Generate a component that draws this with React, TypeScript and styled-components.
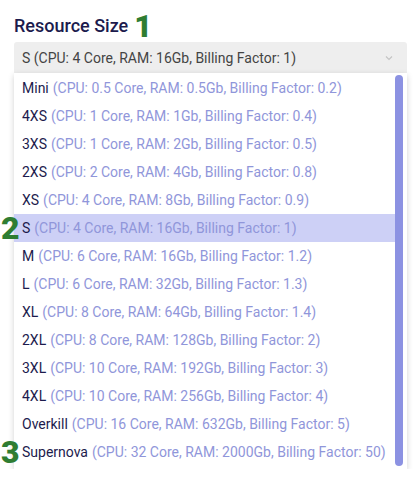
import React from 'react';
import styled, { createGlobalStyle } from 'styled-components';

const GlobalStyle = createGlobalStyle`
  body {
    margin: 0;
    background: #ffffff;
    font-family: Roboto, "Liberation Sans", sans-serif;
  }
`;

interface SizeOption {
  name: string;
  cpu: string;
  ram: string;
  factor: string;
  marker?: string;
}

const options: SizeOption[] = [
  { name: 'Mini', cpu: '0.5', ram: '0.5Gb', factor: '0.2' },
  { name: '4XS', cpu: '1', ram: '1Gb', factor: '0.4' },
  { name: '3XS', cpu: '1', ram: '2Gb', factor: '0.5' },
  { name: '2XS', cpu: '2', ram: '4Gb', factor: '0.8' },
  { name: 'XS', cpu: '4', ram: '8Gb', factor: '0.9' },
  { name: 'S', cpu: '4', ram: '16Gb', factor: '1', marker: '2' },
  { name: 'M', cpu: '6', ram: '16Gb', factor: '1.2' },
  { name: 'L', cpu: '6', ram: '32Gb', factor: '1.3' },
  { name: 'XL', cpu: '8', ram: '64Gb', factor: '1.4' },
  { name: '2XL', cpu: '8', ram: '128Gb', factor: '2' },
  { name: '3XL', cpu: '10', ram: '192Gb', factor: '3' },
  { name: '4XL', cpu: '10', ram: '256Gb', factor: '4' },
  { name: 'Overkill', cpu: '16', ram: '632Gb', factor: '5' },
  { name: 'Supernova', cpu: '32', ram: '2000Gb', factor: '50', marker: '3' },
];

const selected = 'S';

const describe = (o: SizeOption) =>
  `(CPU: ${o.cpu} Core, RAM: ${o.ram}, Billing Factor: ${o.factor})`;

const Page = styled.div`
  padding: 8px 12px 0 14px;
  width: 393px;
`;

const Heading = styled.div`
  display: flex;
  align-items: flex-end;
  gap: 6px;
  height: 34px;
`;

const Title = styled.span`
  font-size: 18px;
  font-weight: 500;
  color: #1c1b4d;
  line-height: 24px;
  margin-bottom: 4px;
`;

const Marker = styled.span`
  font-family: Roboto, "Liberation Sans", sans-serif;
  font-weight: 900;
  font-size: 31px;
  line-height: 31px;
  color: #2f7d32;
`;

const Select = styled.div`
  display: flex;
  align-items: center;
  justify-content: space-between;
  height: 31px;
  padding: 0 12px 0 8px;
  background: #eeeeee;
  border-radius: 3px 3px 0 0;
  font-size: 14px;
  color: #444444;
`;

const Chevron = styled.svg`
  width: 12px;
  height: 12px;
  color: #c4c4c4;
`;

const Menu = styled.div`
  display: flex;
  background: #ffffff;
  box-shadow: 0 2px 6px rgba(0, 0, 0, 0.18);
  padding: 1px 4px 3px 0;
`;

const List = styled.div`
  flex: 1;
  display: flex;
  flex-direction: column;
`;

const Row = styled.div<{ $active?: boolean }>`
  position: relative;
  display: flex;
  align-items: center;
  height: 28px;
  padding-left: 8px;
  font-size: 14px;
  white-space: nowrap;
  background: ${(p) => (p.$active ? '#cdd0f6' : 'transparent')};
`;

const Name = styled.span`
  color: #1c1b4d;
  margin-right: 4px;
`;

const Detail = styled.span`
  color: #9096da;
`;

const RowMarker = styled(Marker)`
  position: absolute;
  left: -13px;
  top: -1px;
  font-size: 32px;
`;

const Scrollbar = styled.div`
  width: 8px;
  margin: 1px 0 0 0;
  border-radius: 4px;
  background: #8c92e2;
`;

export default function App() {
  const current = options.find((o) => o.name === selected)!;
  return (
    <Page>
      <GlobalStyle />
      <Heading>
        <Title>Resource Size</Title>
        <Marker>1</Marker>
      </Heading>
      <Select>
        <span>
          {current.name} {describe(current)}
        </span>
        <Chevron viewBox="0 0 12 12" fill="none">
          <path d="M3 4.5 6 7.5 9 4.5" stroke="currentColor" strokeWidth="1.2" />
        </Chevron>
      </Select>
      <Menu>
        <List>
          {options.map((o) => (
            <Row key={o.name} $active={o.name === selected}>
              {o.marker && <RowMarker>{o.marker}</RowMarker>}
              <Name>{o.name}</Name>
              <Detail>{describe(o)}</Detail>
            </Row>
          ))}
        </List>
        <Scrollbar />
      </Menu>
    </Page>
  );
}
